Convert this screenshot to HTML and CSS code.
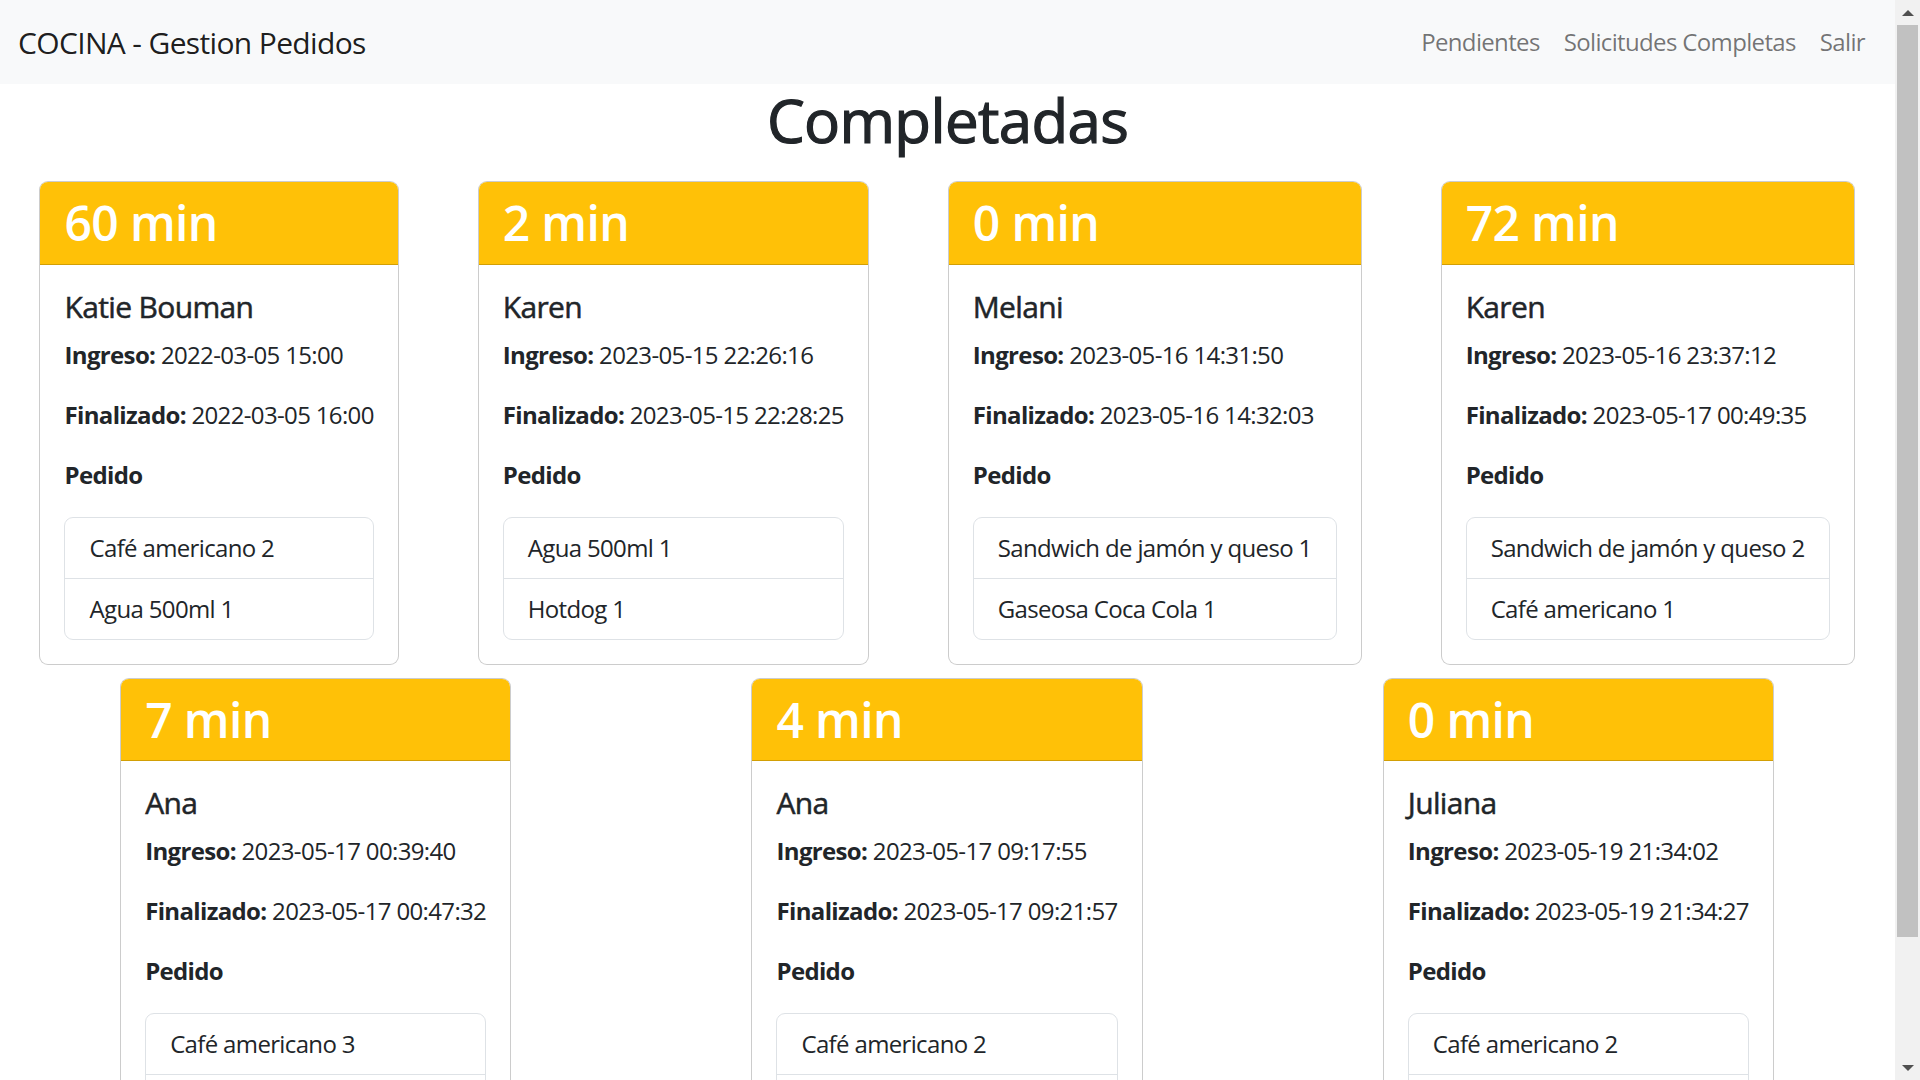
FILE: index.html
```html
<!DOCTYPE html>
<html lang="es">
<head>
<meta charset="utf-8">
<title>COCINA - Gestion Pedidos</title>
<link rel="stylesheet" href="styles.css">
</head>
<body>
<div class="window">
  <div class="viewport">
    <nav class="navbar">
      <a class="brand" href="#">COCINA - Gestion Pedidos</a>
      <ul class="nav">
        <li><a class="nav-link" href="#">Pendientes</a></li>
        <li><a class="nav-link" href="#">Solicitudes Completas</a></li>
        <li><a class="nav-link" href="#">Salir</a></li>
      </ul>
    </nav>
    <h1 class="page-title">Completadas</h1>
    <div class="cards">
      <div class="card">
        <div class="card-header"><h2>60 min</h2></div>
        <div class="card-body">
          <h5 class="card-title">Katie Bouman</h5>
          <p><b>Ingreso:</b> 2022-03-05 15:00</p>
          <p><b>Finalizado:</b> 2022-03-05 16:00</p>
          <p><b>Pedido</b></p>
          <ul class="list-group">
            <li>Café americano 2</li>
            <li>Agua 500ml 1</li>
          </ul>
        </div>
      </div>
      <div class="card">
        <div class="card-header"><h2>2 min</h2></div>
        <div class="card-body">
          <h5 class="card-title">Karen</h5>
          <p><b>Ingreso:</b> 2023-05-15 22:26:16</p>
          <p><b>Finalizado:</b> 2023-05-15 22:28:25</p>
          <p><b>Pedido</b></p>
          <ul class="list-group">
            <li>Agua 500ml 1</li>
            <li>Hotdog 1</li>
          </ul>
        </div>
      </div>
      <div class="card">
        <div class="card-header"><h2>0 min</h2></div>
        <div class="card-body">
          <h5 class="card-title">Melani</h5>
          <p><b>Ingreso:</b> 2023-05-16 14:31:50</p>
          <p><b>Finalizado:</b> 2023-05-16 14:32:03</p>
          <p><b>Pedido</b></p>
          <ul class="list-group">
            <li>Sandwich de jamón y queso 1</li>
            <li>Gaseosa Coca Cola 1</li>
          </ul>
        </div>
      </div>
      <div class="card">
        <div class="card-header"><h2>72 min</h2></div>
        <div class="card-body">
          <h5 class="card-title">Karen</h5>
          <p><b>Ingreso:</b> 2023-05-16 23:37:12</p>
          <p><b>Finalizado:</b> 2023-05-17 00:49:35</p>
          <p><b>Pedido</b></p>
          <ul class="list-group">
            <li>Sandwich de jamón y queso 2</li>
            <li>Café americano 1</li>
          </ul>
        </div>
      </div>
      <div class="card">
        <div class="card-header"><h2>7 min</h2></div>
        <div class="card-body">
          <h5 class="card-title">Ana</h5>
          <p><b>Ingreso:</b> 2023-05-17 00:39:40</p>
          <p><b>Finalizado:</b> 2023-05-17 00:47:32</p>
          <p><b>Pedido</b></p>
          <ul class="list-group">
            <li>Café americano 3</li>
            <li class="below-fold"></li>
          </ul>
        </div>
      </div>
      <div class="card">
        <div class="card-header"><h2>4 min</h2></div>
        <div class="card-body">
          <h5 class="card-title">Ana</h5>
          <p><b>Ingreso:</b> 2023-05-17 09:17:55</p>
          <p><b>Finalizado:</b> 2023-05-17 09:21:57</p>
          <p><b>Pedido</b></p>
          <ul class="list-group">
            <li>Café americano 2</li>
            <li class="below-fold"></li>
          </ul>
        </div>
      </div>
      <div class="card">
        <div class="card-header"><h2>0 min</h2></div>
        <div class="card-body">
          <h5 class="card-title">Juliana</h5>
          <p><b>Ingreso:</b> 2023-05-19 21:34:02</p>
          <p><b>Finalizado:</b> 2023-05-19 21:34:27</p>
          <p><b>Pedido</b></p>
          <ul class="list-group">
            <li>Café americano 2</li>
            <li class="below-fold"></li>
          </ul>
        </div>
      </div>
    </div>
  </div>
  <div class="scrollbar">
    <div class="sb-btn"><span class="arrow-up"></span></div>
    <div class="sb-thumb"></div>
    <div class="sb-track"></div>
    <div class="sb-btn"><span class="arrow-down"></span></div>
  </div>
</div>
</body>
</html>
```

FILE: styles.css
```css
* { box-sizing: border-box; }

html, body {
  margin: 0;
  padding: 0;
  height: 1080px;
  overflow: hidden;
}

body {
  font-family: "Open Sans", "Noto Sans", sans-serif;
  font-size: 24px;
  line-height: 1.5;
  color: #212529;
  background: #fff;
  letter-spacing: -0.027em;
}

.window {
  display: flex;
  height: 1080px;
}

.viewport {
  flex: 1;
  height: 1080px;
  overflow: hidden;
}

/* Navbar */
.navbar {
  display: flex;
  align-items: center;
  justify-content: space-between;
  background: #f8f9fa;
  height: 84px;
  padding: 12px 18px;
}

.brand {
  font-size: 30px;
  line-height: 45px;
  padding: 7.5px 0;
  color: rgba(0, 0, 0, 0.9);
  text-decoration: none;
}

.nav {
  display: flex;
  list-style: none;
  margin: 0;
  padding: 0;
}

.nav-link {
  display: block;
  padding: 12px 12px;
  line-height: 36px;
  color: rgba(0, 0, 0, 0.55);
  text-decoration: none;
}

/* Title */
.page-title {
  margin: 0 0 12px;
  font-size: 60px;
  line-height: 72px;
  font-weight: 400;
  -webkit-text-stroke: 1.2px #212529;
  text-align: center;
  color: #212529;
}

/* Cards */
.cards {
  display: flex;
  flex-wrap: wrap;
  justify-content: space-around;
  width: 1894px;
}

.card {
  margin-top: 13px;
  background: #fff;
  border: 1px solid rgba(0, 0, 0, 0.2);
  border-radius: 9px;
  overflow: hidden;
}

.card-header {
  background: #ffc107;
  padding: 12px 24px;
  border-bottom: 1px solid rgba(0, 0, 0, 0.175);
}

.card-header h2 {
  margin: 0;
  font-size: 48px;
  line-height: 57.6px;
  font-weight: 600;
  color: #fff;
}

.card-body {
  padding: 24px;
}

.card-title {
  margin: 0 0 12px;
  font-size: 30px;
  line-height: 36px;
  font-weight: 400;
  -webkit-text-stroke: 0.5px #212529;
}

.card-body p {
  margin: 0 0 24px;
  line-height: 36px;
}

.card-body b {
  font-weight: 700;
}

.list-group {
  list-style: none;
  margin: 0;
  padding: 0;
  border: 1px solid #dee2e6;
  border-radius: 9px;
}

.list-group li {
  padding: 12px 24px;
  line-height: 36px;
}

.list-group li.below-fold {
  height: 61px;
}

.list-group li + li {
  border-top: 1px solid #dee2e6;
}

/* Scrollbar */
.scrollbar {
  width: 25px;
  height: 1080px;
  background: #f1f1f1;
  display: flex;
  flex-direction: column;
}

.sb-btn {
  height: 25px;
  display: flex;
  align-items: center;
  justify-content: center;
}

.sb-thumb {
  height: 912px;
  margin: 0 2px;
  background: #c1c1c1;
}

.sb-track {
  flex: 1;
}

.arrow-up {
  width: 0;
  height: 0;
  border-left: 6px solid transparent;
  border-right: 6px solid transparent;
  border-bottom: 6px solid #505050;
}

.arrow-down {
  width: 0;
  height: 0;
  border-left: 6px solid transparent;
  border-right: 6px solid transparent;
  border-top: 6px solid #505050;
}
```
